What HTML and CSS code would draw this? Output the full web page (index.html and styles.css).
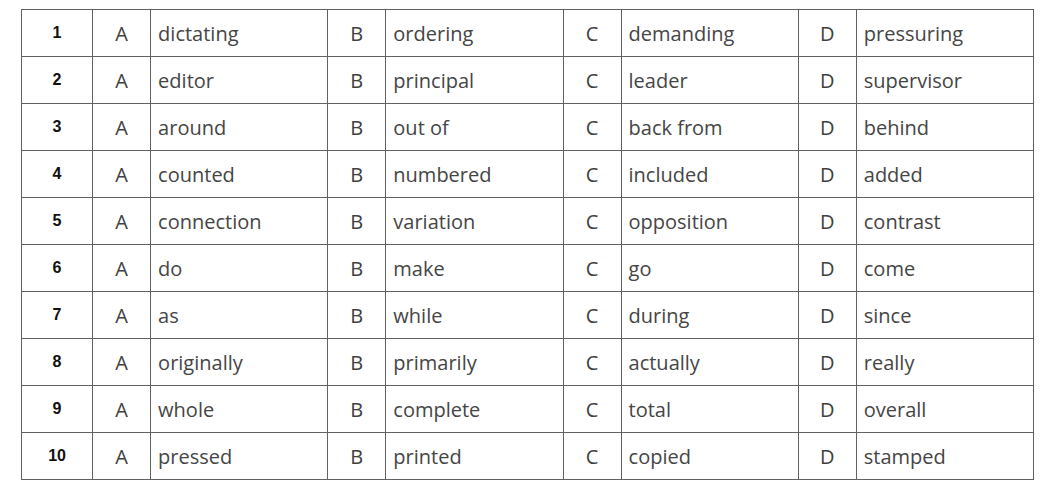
FILE: index.html
```html
<!DOCTYPE html>
<html>
<head>
<meta charset="utf-8">
<link rel="stylesheet" href="styles.css">
</head>
<body>
<table class="quiz">
<colgroup>
<col class="c-num"><col class="c-let"><col class="c-word"><col class="c-let"><col class="c-word"><col class="c-let"><col class="c-word"><col class="c-let"><col class="c-word">
</colgroup>
<tbody>
<tr><td class="num">1</td><td class="let">A</td><td class="word">dictating</td><td class="let">B</td><td class="word">ordering</td><td class="let">C</td><td class="word">demanding</td><td class="let">D</td><td class="word">pressuring</td></tr>
<tr><td class="num">2</td><td class="let">A</td><td class="word">editor</td><td class="let">B</td><td class="word">principal</td><td class="let">C</td><td class="word">leader</td><td class="let">D</td><td class="word">supervisor</td></tr>
<tr><td class="num">3</td><td class="let">A</td><td class="word">around</td><td class="let">B</td><td class="word">out of</td><td class="let">C</td><td class="word">back from</td><td class="let">D</td><td class="word">behind</td></tr>
<tr><td class="num">4</td><td class="let">A</td><td class="word">counted</td><td class="let">B</td><td class="word">numbered</td><td class="let">C</td><td class="word">included</td><td class="let">D</td><td class="word">added</td></tr>
<tr><td class="num">5</td><td class="let">A</td><td class="word">connection</td><td class="let">B</td><td class="word">variation</td><td class="let">C</td><td class="word">opposition</td><td class="let">D</td><td class="word">contrast</td></tr>
<tr><td class="num">6</td><td class="let">A</td><td class="word">do</td><td class="let">B</td><td class="word">make</td><td class="let">C</td><td class="word">go</td><td class="let">D</td><td class="word">come</td></tr>
<tr><td class="num">7</td><td class="let">A</td><td class="word">as</td><td class="let">B</td><td class="word">while</td><td class="let">C</td><td class="word">during</td><td class="let">D</td><td class="word">since</td></tr>
<tr><td class="num">8</td><td class="let">A</td><td class="word">originally</td><td class="let">B</td><td class="word">primarily</td><td class="let">C</td><td class="word">actually</td><td class="let">D</td><td class="word">really</td></tr>
<tr><td class="num">9</td><td class="let">A</td><td class="word">whole</td><td class="let">B</td><td class="word">complete</td><td class="let">C</td><td class="word">total</td><td class="let">D</td><td class="word">overall</td></tr>
<tr><td class="num">10</td><td class="let">A</td><td class="word">pressed</td><td class="let">B</td><td class="word">printed</td><td class="let">C</td><td class="word">copied</td><td class="let">D</td><td class="word">stamped</td></tr>
</tbody>
</table>
</body>
</html>
```
FILE: styles.css
```css
html, body {
  margin: 0;
  padding: 0;
  background: #ffffff;
}
body {
  padding: 9px 0 0 21px;
}
.quiz {
  border-collapse: collapse;
  table-layout: fixed;
  width: 1013px;
  font-family: "Open Sans", "Liberation Sans", sans-serif;
  color: #454545;
}
.c-num { width: 71px; }
.c-let { width: 58px; }
.c-word { width: 177px; }
.quiz td {
  border: 1px solid #606060;
  height: 47px;
  padding: 0;
  vertical-align: middle;
  box-sizing: border-box;
}
.num {
  text-align: center;
  font-family: "Liberation Sans", Arial, sans-serif;
  font-weight: bold;
  font-size: 16px;
  color: #111;
}
.let {
  text-align: center;
  font-size: 20px;
  color: #404040;
}
.word {
  text-align: left;
  padding-left: 7px !important;
  font-size: 20px;
}
```
